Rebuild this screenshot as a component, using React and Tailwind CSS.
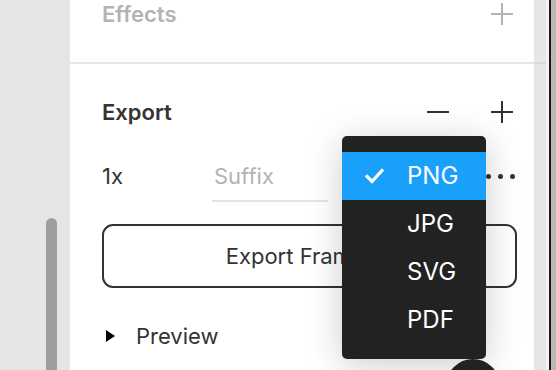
const Plus = ({ color = "#333333" }) => (
  <svg width="22" height="22" viewBox="0 0 22 22">
    <path d="M11 0v22M0 11h22" stroke={color} strokeWidth="2" fill="none" />
  </svg>
);

const Minus = () => (
  <svg width="22" height="22" viewBox="0 0 22 22">
    <path d="M0 11h22" stroke="#333333" strokeWidth="2" fill="none" />
  </svg>
);

const Check = () => (
  <svg width="19" height="16" viewBox="0 0 19 16">
    <path d="M2 8.5l5 5L17 2.5" stroke="#ffffff" strokeWidth="3.2" fill="none" strokeLinecap="square" />
  </svg>
);

const formats = ["PNG", "JPG", "SVG", "PDF"];

export default function App() {
  return (
    <div
      className="relative flex w-[556px] h-[370px] overflow-hidden bg-white text-[#333333]"
      style={{ fontFamily: "Inter, 'Noto Sans', sans-serif" }}
    >
      {/* left gutter with scrollbar */}
      <div className="w-[70px] shrink-0 bg-[#e5e5e5] flex flex-col pt-[218px] pl-[46px]">
        <div className="w-[11px] flex-1 rounded-t-full bg-[#9e9e9e]"></div>
      </div>

      {/* properties panel */}
      <div className="w-[464px] shrink-0 flex flex-col">
        <div className="h-[64px] border-b-2 border-[#e6e6e6] flex items-start justify-between pl-[32px] pr-[21px]">
          <span className="text-[22px] leading-[28px] font-semibold text-[#b3b3b3]">Effects</span>
          <div className="pt-[3px]">
            <Plus color="#b3b3b3" />
          </div>
        </div>

        <div className="flex flex-col pl-[32px] pr-[17px]">
          <div className="mt-[24px] h-[48px] flex items-center justify-between">
            <span className="text-[22px] font-semibold">Export</span>
            <div className="flex items-center gap-[42px] pr-[4px]">
              <Minus />
              <Plus />
            </div>
          </div>

          <div className="mt-[16px] h-[48px] flex items-center">
            <span className="w-[110px] text-[22px]">1x</span>
            <div className="relative h-[48px] w-[116px] flex items-center pl-[2px]">
              <span className="text-[22px] text-[#b3b3b3]">Suffix</span>
              <div className="absolute left-0 right-0 bottom-[-2px] h-[2px] bg-[#e5e5e5]"></div>
            </div>
            <div className="ml-auto flex items-center gap-[7px] pr-[2px]">
              <span className="w-[5px] h-[5px] rounded-full bg-[#333333]"></span>
              <span className="w-[5px] h-[5px] rounded-full bg-[#333333]"></span>
              <span className="w-[5px] h-[5px] rounded-full bg-[#333333]"></span>
            </div>
          </div>

          <button className="mt-[24px] h-[64px] w-[415px] border-2 border-[#333333] rounded-[11px] flex items-center justify-center text-[22px] text-[#333333]">
            Export Frame 12
          </button>

          <div className="mt-[24px] h-[48px] flex items-center">
            <svg width="9" height="12" viewBox="0 0 9 12" className="ml-[4px]">
              <path d="M0 0L9 6L0 12Z" fill="#000000" />
            </svg>
            <span className="ml-[21px] text-[22px]">Preview</span>
          </div>
        </div>
      </div>

      {/* right edge strip */}
      <div className="flex-1 flex">
        <div className="w-[12px] bg-[#e6e6e6] flex flex-col">
          <div className="h-[62px]"></div>
          <div className="h-[2px] bg-[#dadada]"></div>
        </div>
        <div className="w-[3px] bg-[#f2f2f2]"></div>
        <div className="w-[2px] bg-[#1a1a1a]"></div>
        <div className="flex-1 bg-[#b8b8b8]"></div>
      </div>

      {/* format dropdown */}
      <div className="absolute left-[342px] top-[136px] w-[144px] h-[223px] rounded-[5px] bg-[#222222] py-[16px] shadow-[0_6px_36px_rgba(0,0,0,0.2)]">
        {formats.map((f, i) => (
          <div
            key={f}
            className={
              i === 0
                ? "h-[48px] flex items-center bg-[#18a0fb] text-white"
                : "h-[48px] flex items-center text-white"
            }
          >
            <div className="w-[65px] flex justify-end pr-[23px]">{i === 0 && <Check />}</div>
            <span className="text-[24px]">{f}</span>
          </div>
        ))}
      </div>

      {/* dark circle peeking at bottom */}
      <div className="absolute left-[446px] top-[359px] w-[54px] h-[54px] rounded-full bg-[#222222]"></div>
    </div>
  );
}
